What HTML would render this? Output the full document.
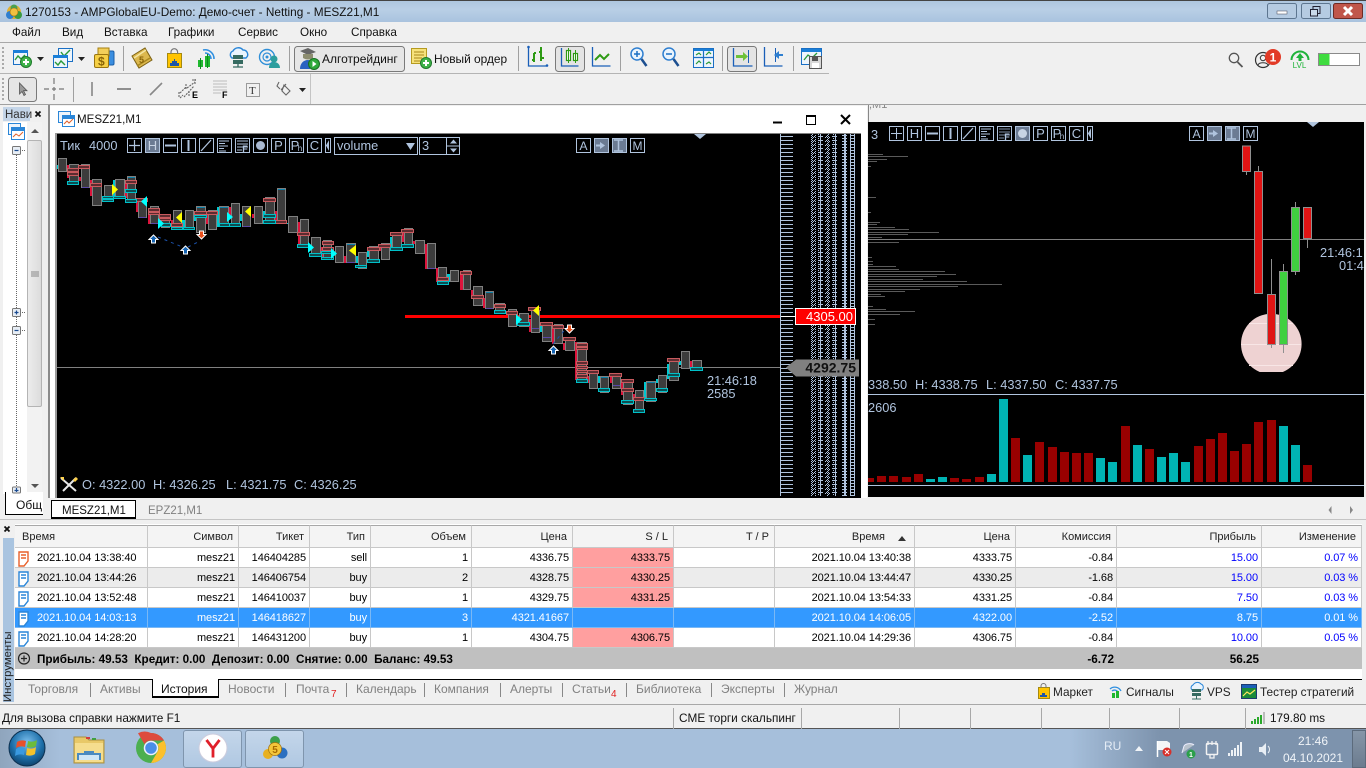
<!DOCTYPE html>
<html lang="ru"><head><meta charset="utf-8"><title>MetaTrader 5</title>
<style>
html,body{margin:0;padding:0;width:1366px;height:768px;overflow:hidden;background:#f0f0f0;font-family:"Liberation Sans","DejaVu Sans",sans-serif;font-size:11px;color:#000}
.a{position:absolute}
svg{position:absolute;left:0;top:0}
svg text{font-family:"Liberation Sans","DejaVu Sans",sans-serif}
table{position:absolute;left:15px;top:525px;width:1347px;table-layout:fixed;border-collapse:separate;border-spacing:0;font-size:11px}
td,th{box-sizing:border-box;padding:1px 3px 0 0;text-align:right;white-space:nowrap;overflow:hidden;border-right:1px solid #c8c8c8;border-bottom:1px solid #c8c8c8;height:20px;font-weight:normal;letter-spacing:-.08px}
th{height:23px;background:#f4f4f4;padding:0 5px 0 0;color:#222;border-top:1px solid #a8a8a8;letter-spacing:0}
tr.g td{background:#ececec}
tr.s td{background:#3399ff;color:#fff;border-color:#7ab8f5}
td.sl{background:#ff9f9f!important}
td.u{color:#0000ff}
tr.s td.u{color:#fff}
tr.t td{background:#c0c0c0;font-weight:bold;height:21px;border:0;font-size:11.7px;letter-spacing:0}
</style></head><body>

<div class="a" style="left:0;top:0;width:1366px;height:22px;background:linear-gradient(#aec6df,#b9cfe6 40%,#a9c3de);border-top:1px solid #444;box-sizing:border-box"></div>
<div class="a" style="left:0;top:42px;width:829px;height:1px;background:#a8a8a8"></div>
<div class="a" style="left:829px;top:42px;width:537px;height:1px;background:#a8a8a8"></div>
<div class="a" style="left:0;top:73px;width:829px;height:1px;background:#b4b4b4"></div>
<div class="a" style="left:310px;top:74px;width:1px;height:30px;background:#c4c4c4"></div>
<div class="a" style="left:0;top:104px;width:1366px;height:1px;background:#a0a0a0"></div>

<!-- navigator -->
<div class="a" style="left:3px;top:107px;width:27px;height:14px;background:#c4d5e8"></div>
<div class="a" style="left:3px;top:122px;width:24px;height:372px;background:#fff"></div>
<div class="a" style="left:27px;top:122px;width:15px;height:372px;background:#f2f2f2"></div>
<div class="a" style="left:27px;top:140px;width:15px;height:267px;background:linear-gradient(90deg,#ececec,#dcdcdc);border:1px solid #b4b4b4;box-sizing:border-box;border-radius:2px"></div>
<div class="a" style="left:48px;top:105px;width:2px;height:393px;background:#8c8c8c"></div>
<div class="a" style="left:5px;top:492px;width:38px;height:23px;background:#fff;border-left:1px solid #000;border-bottom:1px solid #000;box-sizing:border-box"></div>

<!-- main chart window -->
<div class="a" style="left:50px;top:106px;width:817px;height:392px;background:#fff"></div>
<div class="a" style="left:55px;top:133px;width:806px;height:2px;background:#808080"></div>
<div class="a" style="left:55px;top:133px;width:2px;height:365px;background:#9a9a9a"></div>
<div class="a" style="left:57px;top:134px;width:804px;height:364px;background:#000"></div>

<!-- right chart window -->
<div class="a" style="left:868px;top:105px;width:496px;height:17px;background:#f0f0f0;overflow:hidden;border-left:1px solid #888;box-sizing:border-box"><span class="a" style="left:0;top:-6px;color:#888;font-size:11px">,M1</span></div>
<div class="a" style="left:868px;top:122px;width:496px;height:375px;background:#000"></div>

<!-- chart tabs -->
<div class="a" style="left:50px;top:498px;width:1316px;height:21px;background:#f0f0f0"></div>
<div class="a" style="left:0;top:519px;width:1366px;height:1px;background:#c4c4c4"></div>
<div class="a" style="left:51px;top:500px;width:85px;height:19px;background:#fff;border:1px solid #000;border-top:1px solid #000;border-bottom:2px solid #000;box-sizing:border-box"></div>

<!-- table panel -->
<div class="a" style="left:15px;top:524px;width:1347px;height:155px;background:#fff"></div>
<div class="a" style="left:3px;top:538px;width:11px;height:164px;background:#a9c4e0"></div>
<div class="a" style="left:3px;top:632px;width:11px;height:70px;writing-mode:vertical-rl;transform:rotate(180deg);font-size:11.3px;line-height:11px;color:#222;text-align:left;white-space:nowrap">Инструменты</div>
<table>
<colgroup><col style="width:133px"><col style="width:91px"><col style="width:71px"><col style="width:61px"><col style="width:101px"><col style="width:101px"><col style="width:101px"><col style="width:101px"><col style="width:140px"><col style="width:101px"><col style="width:101px"><col style="width:145px"><col style="width:100px"></colgroup>
<tr><th style="text-align:left;padding-left:7px">Время</th><th>Символ</th><th>Тикет</th><th>Тип</th><th>Объем</th><th>Цена</th><th>S / L</th><th>T / P</th><th style="padding-right:29px">Время</th><th>Цена</th><th>Комиссия</th><th>Прибыль</th><th>Изменение</th></tr>
<tr><td style="text-align:left;padding-left:22px">2021.10.04 13:38:40</td><td>mesz21</td><td>146404285</td><td>sell</td><td>1</td><td>4336.75</td><td class="sl">4333.75</td><td></td><td>2021.10.04 13:40:38</td><td>4333.75</td><td>-0.84</td><td class="u">15.00</td><td class="u">0.07 %</td></tr>
<tr class="g"><td style="text-align:left;padding-left:22px">2021.10.04 13:44:26</td><td>mesz21</td><td>146406754</td><td>buy</td><td>2</td><td>4328.75</td><td class="sl">4330.25</td><td></td><td>2021.10.04 13:44:47</td><td>4330.25</td><td>-1.68</td><td class="u">15.00</td><td class="u">0.03 %</td></tr>
<tr><td style="text-align:left;padding-left:22px">2021.10.04 13:52:48</td><td>mesz21</td><td>146410037</td><td>buy</td><td>1</td><td>4329.75</td><td class="sl">4331.25</td><td></td><td>2021.10.04 13:54:33</td><td>4331.25</td><td>-0.84</td><td class="u">7.50</td><td class="u">0.03 %</td></tr>
<tr class="s"><td style="text-align:left;padding-left:22px">2021.10.04 14:03:13</td><td>mesz21</td><td>146418627</td><td>buy</td><td>3</td><td>4321.41667</td><td></td><td></td><td>2021.10.04 14:06:05</td><td>4322.00</td><td>-2.52</td><td class="u">8.75</td><td class="u">0.01 %</td></tr>
<tr><td style="text-align:left;padding-left:22px">2021.10.04 14:28:20</td><td>mesz21</td><td>146431200</td><td>buy</td><td>1</td><td>4304.75</td><td class="sl">4306.75</td><td></td><td>2021.10.04 14:29:36</td><td>4306.75</td><td>-0.84</td><td class="u">10.00</td><td class="u">0.05 %</td></tr>
<tr class="t"><td colspan="10" style="text-align:left;padding-left:22px">Прибыль: 49.53&nbsp; Кредит: 0.00&nbsp; Депозит: 0.00&nbsp; Снятие: 0.00&nbsp; Баланс: 49.53</td><td>-6.72</td><td>56.25</td><td></td></tr>
</table>
<div class="a" style="left:15px;top:679px;width:1347px;height:1px;background:#000"></div>
<div class="a" style="left:152px;top:679px;width:67px;height:19px;background:#fff;border:1px solid #000;border-top:0;border-bottom:2px solid #000;box-sizing:border-box"></div>
<div class="a" style="left:0;top:704px;width:1366px;height:1px;background:#a8a8a8"></div>
<div class="a" style="left:0;top:728px;width:1366px;height:1px;background:#555"></div>

<!-- taskbar -->
<div class="a" style="left:0;top:729px;width:1366px;height:39px;background:linear-gradient(90deg,#8fa5bd 0,#a6bfdb 60px,#a6bfdb 1070px,#7d93ad 1160px,#7d93ad 1366px)"></div>
<div class="a" style="left:183px;top:730px;width:59px;height:38px;border:1px solid #7f95ad;border-radius:3px;box-sizing:border-box;background:linear-gradient(#c4d6ea,#b0c8e2)"></div>
<div class="a" style="left:245px;top:730px;width:59px;height:38px;border:1px solid #7f95ad;border-radius:3px;box-sizing:border-box;background:linear-gradient(#c4d6ea,#b0c8e2)"></div>
<div class="a" style="left:1352px;top:730px;width:14px;height:38px;background:linear-gradient(#8696a8,#6c7c8f);border:1px solid #5c6b7c;box-sizing:border-box"></div>

<svg width="1366" height="768" viewBox="0 0 1366 768">
<defs>
<pattern id="tk" width="13" height="4" patternUnits="userSpaceOnUse"><rect width="13" height="1" fill="#b0c4de"/></pattern>
<pattern id="ch" width="4" height="4" patternUnits="userSpaceOnUse"><rect width="1" height="1" x="0" y="0" fill="#b0c4de"/><rect width="1" height="1" x="2" y="0" fill="#b0c4de"/><rect width="1" height="1" x="1" y="1" fill="#b0c4de"/><rect width="1" height="1" x="3" y="1" fill="#b0c4de"/><rect width="1" height="1" x="0" y="2" fill="#b0c4de"/><rect width="1" height="1" x="3" y="3" fill="#b0c4de"/></pattern>
<pattern id="dn" width="5" height="4" patternUnits="userSpaceOnUse"><rect width="5" height="1" fill="#b0c4de"/><rect width="1" height="4" fill="#b0c4de"/><rect x="3" y="2" width="1" height="1" fill="#b0c4de"/></pattern>
<pattern id="ld" width="5" height="3" patternUnits="userSpaceOnUse"><rect width="5" height="1" fill="#b0c4de"/><rect width="1" height="3" fill="#b0c4de"/><rect x="4" width="1" height="3" fill="#b0c4de"/></pattern>
<radialGradient id="orb" cx=".5" cy=".35" r=".7"><stop offset="0" stop-color="#7cc0ee"/><stop offset=".6" stop-color="#1c6ea8"/><stop offset="1" stop-color="#0c3a60"/></radialGradient>
</defs>

<!-- title bar -->
<circle cx="14" cy="12" r="7" fill="#e0b030"/><circle cx="10" cy="15" r="4" fill="#2f7fd0"/><circle cx="18" cy="15" r="4" fill="#3a9a40"/><circle cx="14" cy="8" r="3.5" fill="#4aa050"/><circle cx="14" cy="12" r="4" fill="#f0c040" stroke="#a07010" stroke-width=".6"/>
<text x="25" y="16" font-size="11.8" fill="#111">1270153 - AMPGlobalEU-Demo: Демо-счет - Netting - MESZ21,M1</text>
<rect x="1267.5" y="3.5" width="29" height="15" rx="2" fill="#b5cbe2" stroke="#5d7690"/>
<rect x="1301.5" y="3.5" width="29" height="15" rx="2" fill="#b5cbe2" stroke="#5d7690"/>
<rect x="1333.5" y="3.5" width="29" height="15" rx="2" fill="#c0564a" stroke="#6d2a24"/>
<rect x="1277" y="11" width="10" height="3" fill="#fff" stroke="#445" stroke-width=".5"/>
<rect x="1313" y="6.5" width="7" height="7" fill="none" stroke="#223" stroke-width="1"/><rect x="1310.5" y="9.5" width="7" height="6.5" fill="#c9d9ea" stroke="#223" stroke-width="1"/>
<path d="M1344 7l8 8M1352 7l-8 8" stroke="#fff" stroke-width="3"/>

<!-- menu -->
<g font-size="11.7" fill="#111">
<text x="12" y="36">Файл</text><text x="62" y="36">Вид</text><text x="104" y="36">Вставка</text><text x="168" y="36">Графики</text><text x="238" y="36">Сервис</text><text x="300" y="36">Окно</text><text x="351" y="36">Справка</text>
</g>

<!-- toolbar grips -->
<g fill="#aaa"><rect x="2" y="47" width="2" height="2"/><rect x="2" y="51" width="2" height="2"/><rect x="2" y="55" width="2" height="2"/><rect x="2" y="59" width="2" height="2"/><rect x="2" y="63" width="2" height="2"/><rect x="2" y="67" width="2" height="2"/>
<rect x="2" y="78" width="2" height="2"/><rect x="2" y="82" width="2" height="2"/><rect x="2" y="86" width="2" height="2"/><rect x="2" y="90" width="2" height="2"/><rect x="2" y="94" width="2" height="2"/><rect x="2" y="98" width="2" height="2"/></g>
<g stroke="#a0a0a0" stroke-width="1"><path d="M123.5 46v25M289.5 46v25M518.5 46v25M620.5 46v25M722.5 46v25M793.5 46v25M73.5 77v25"/></g>

<!-- icon 1 -->
<rect x="13.5" y="50.5" width="14" height="14" fill="#eef5fc" stroke="#1a6fc4"/><rect x="13" y="50" width="15" height="3" fill="#1a7fd8"/><path d="M15 60l3-4 3 3 4-4" fill="none" stroke="#2a9a3a" stroke-width="1.4"/><circle cx="26" cy="62" r="5.5" fill="#3fb34a" stroke="#1e7a2a"/><path d="M23 62h6M26 59v6" stroke="#fff" stroke-width="2"/>
<path d="M37 57h7l-3.5 4z" fill="#222"/>
<!-- icon 2 -->
<rect x="58.5" y="48.5" width="14" height="13" fill="#eef5fc" stroke="#1a6fc4"/><path d="M61 52l3 4 6-6" fill="none" stroke="#2a9a3a" stroke-width="1.4"/><rect x="53.5" y="55.5" width="14" height="12" fill="#eef5fc" stroke="#1a6fc4"/><rect x="53" y="55" width="15" height="3" fill="#1a7fd8"/><path d="M55 62l3 3 3-4 4 4" fill="none" stroke="#2a9a3a" stroke-width="1.4"/>
<path d="M78 57h7l-3.5 4z" fill="#222"/>
<!-- icon 3 -->
<rect x="100" y="51" width="14" height="14" rx="1.5" fill="#3a8ee0" stroke="#1a5fa8"/><path d="M98 48h11v8h-11z" fill="#f2cf5a" stroke="#a67f10"/><rect x="94.5" y="54.5" width="14" height="13" rx="1.5" fill="#f5cf45" stroke="#9a7510"/><text x="98" y="65.5" font-size="12" font-weight="bold" fill="#8a6508">$</text>
<!-- icon 4 -->
<path d="M132 56l13-8 7 12-13 8z" fill="#dcb84e" stroke="#7d6214"/><path d="M134 58l12-8" stroke="#f4e6a4" stroke-width="1.5"/><path d="M137 66l13-8" stroke="#a98820" stroke-width="1.5"/><text x="139" y="63" font-size="9" font-weight="bold" fill="#8a6508">5</text>
<!-- icon 5 bag -->
<rect x="167.5" y="53.5" width="14" height="14" fill="#ffc400" stroke="#a58a10"/><path d="M171 54v-2a3.3 3.3 0 0 1 6.6 0v2" fill="none" stroke="#777" stroke-width="1.2"/><path d="M170 66v-3h2v-2h2v-2h1v2h2v2h2v3z" fill="#1d56a8"/>
<!-- icon 6 signals -->
<path d="M203 50a9 9 0 0 1 11 9M205 53a6 6 0 0 1 6 6" fill="none" stroke="#2f8fe0" stroke-width="1.6"/>
<rect x="198" y="60" width="5" height="7" fill="#1fb82f"/><rect x="205" y="56" width="5" height="11" fill="#1fb82f"/><path d="M200.5 58v11M207.5 54v14" stroke="#0d8a1d"/>
<!-- icon 7 cloud -->
<path d="M232 58a4 4 0 0 1 1-7 6 6 0 0 1 10-1 4.500 4.500 0 0 1 3 8z" fill="#eaf4fd" stroke="#2a86d8" stroke-width="1.4"/><rect x="233" y="55" width="10" height="4" fill="#356a60"/><rect x="233" y="60" width="10" height="4" fill="#356a60"/><path d="M238 64v3M233 67h10" stroke="#356a60" stroke-width="1.3"/>
<!-- icon 8 -->
<circle cx="267" cy="57" r="7.500" fill="none" stroke="#2f8fd8" stroke-width="1.4"/><circle cx="267" cy="57" r="4" fill="none" stroke="#2f8fd8" stroke-width="1.2"/><circle cx="267" cy="57" r="1.500" fill="#2f8fd8"/><circle cx="274" cy="59" r="3.500" fill="#2c9e9e"/><path d="M269 68c0-4 2-6 5-6s6 2 6 6z" fill="#2c9e9e"/>
<!-- algo button -->
<rect x="294.5" y="46.5" width="110" height="25" rx="3" fill="#e6e6e6" stroke="#7a7a7a"/>
<path d="M300 51l8-3 8 4-8 3z" fill="#666"/><path d="M303 54v4c3 2 7 2 10 0v-4z" fill="#8d8d70"/><path d="M300 69c0-5 3-9 8-9 3 0 4 2 5 3l-3 6z" fill="#2a62c0"/><circle cx="314" cy="64" r="5.500" fill="#2fa83a" stroke="#176f22"/><path d="M312.500 61l4 3-4 3z" fill="#fff"/>
<text x="322" y="63" font-size="12" fill="#111">Алготрейдинг</text>
<!-- new order -->
<rect x="411.500" y="48.500" width="15" height="15" fill="#f6e27a" stroke="#b59a20"/><path d="M414 52h10M414 55h10M414 58h8M414 61h6" stroke="#a8861a"/><circle cx="426" cy="63" r="5.500" fill="#3fb34a" stroke="#1e7a2a"/><path d="M423 63h6M426 60v6" stroke="#fff" stroke-width="2"/>
<text x="434" y="63" font-size="11.9" fill="#111">Новый ордер</text>
<!-- bar chart -->
<path d="M528.500 47v19h19" fill="none" stroke="#1a5fb8" stroke-width="1.3"/><path d="M534 62v-9M532 60h2M534 53h2M541 61v-14M539 52h2M541 58h3" fill="none" stroke="#2e9a14" stroke-width="2"/><circle cx="528.500" cy="47" r="1.300" fill="#1a5fb8"/><circle cx="547" cy="65.500" r="1.300" fill="#1a5fb8"/>
<rect x="555.500" y="46.500" width="29" height="25" rx="3" fill="#e4e4e4" stroke="#7a7a7a"/>
<path d="M561.500 48v18h17" fill="none" stroke="#1a5fb8" stroke-width="1.3"/><rect x="566.500" y="50.500" width="4" height="10" fill="#fff" stroke="#2e9a14" stroke-width="1.2"/><rect x="573.500" y="53.500" width="4" height="7" fill="#fff" stroke="#2e9a14" stroke-width="1.2"/><path d="M568.500 48v15M575.500 50v13" stroke="#2e9a14"/>
<path d="M592.500 47v19h18" fill="none" stroke="#1a5fb8" stroke-width="1.3"/><path d="M595 60l5-5 4 4 5-5" fill="none" stroke="#2e9a14" stroke-width="2"/>
<!-- zoom -->
<circle cx="637" cy="54" r="6" fill="#eaf4fd" stroke="#2f7fd0" stroke-width="1.500"/><path d="M634 54h6M637 51v6" stroke="#1a6fc4" stroke-width="1.500"/><path d="M641.500 59l5 7" stroke="#1d4f90" stroke-width="2.500"/>
<circle cx="669" cy="54" r="6" fill="#eaf4fd" stroke="#2f7fd0" stroke-width="1.500"/><path d="M666 54h6" stroke="#1a6fc4" stroke-width="1.500"/><path d="M673.500 59l5 7" stroke="#1d4f90" stroke-width="2.500"/>
<!-- tile -->
<rect x="693.500" y="48.500" width="20" height="19" fill="#eef5fc" stroke="#1a6fc4"/><path d="M703.500 48v19M693 57.500h20" stroke="#1a6fc4" stroke-width="1.200"/><rect x="694" y="49" width="19" height="2" fill="#1a7fd8"/><path d="M696 55l3-2 2 2M706 55l3-3 2 2M696 64l3-3 2 2M706 64l3-2 2 2" fill="none" stroke="#2a9a3a" stroke-width="1.200"/>
<!-- autoscroll -->
<rect x="727.500" y="46.500" width="29" height="25" rx="3" fill="#e4e4e4" stroke="#7a7a7a"/>
<path d="M733.500 48v18h19" fill="none" stroke="#1a5fb8" stroke-width="1.300"/><path d="M748.500 50v13" stroke="#1a5fb8"/><path d="M736 55h7v-3l5 4.500-5 4.500v-3h-7z" fill="#6cc23a"/>
<path d="M764.500 47v19h18" fill="none" stroke="#1a5fb8" stroke-width="1.300"/><path d="M775.500 48v14" stroke="#1a5fb8"/><path d="M783 54h-4v-3l-5 4 5 4v-3h4z" fill="#2f7fd0"/>
<!-- save -->
<rect x="801.500" y="48.500" width="20" height="16" fill="#eef5fc" stroke="#1a6fc4"/><rect x="802" y="49" width="19" height="3" fill="#1a7fd8"/><path d="M804 60l4-5 4 3 5-5" fill="none" stroke="#2a9a3a" stroke-width="1.300"/><rect x="809.500" y="56.500" width="12" height="12" fill="#d8d8d8" stroke="#555"/><rect x="812" y="57" width="6" height="4" fill="#555"/><rect x="812" y="63" width="7" height="5" fill="#fff"/>
<!-- right icons -->
<circle cx="1234" cy="58" r="4.700" fill="none" stroke="#555" stroke-width="1.300"/><path d="M1237.500 62l5 5" stroke="#555" stroke-width="1.800"/>
<circle cx="1263" cy="60" r="7.500" fill="none" stroke="#333" stroke-width="1.200"/><circle cx="1263" cy="58" r="2.700" fill="none" stroke="#333"/><path d="M1258 65c1-3 9-3 10 0" fill="none" stroke="#333"/>
<circle cx="1273" cy="57" r="8" fill="#e23a26"/><text x="1273" y="61.500" font-size="12" font-weight="bold" fill="#fff" text-anchor="middle">1</text>
<path d="M1291.500 60a8.500 8.500 0 0 1 17 0" fill="none" stroke="#1fb33a" stroke-width="2"/><path d="M1300 53l4 5h-2.500v3h-3v-3h-2.500z" fill="#1fb33a"/><text x="1299.500" y="68" font-size="8" fill="#1fb33a" text-anchor="middle">LVL</text>
<rect x="1318.500" y="53.500" width="41" height="12" fill="#fff" stroke="#8a8a8a"/><rect x="1319" y="54" width="10.500" height="11" fill="#3fdc3f"/>

<!-- row 2 -->
<rect x="8.500" y="77.500" width="28" height="24" rx="3" fill="#e6e6e6" stroke="#7a7a7a"/>
<path d="M19.500 83v11l2.500-2.500 2 4 1.500-1-2-3.800h3.500z" fill="#9a9a9a" stroke="#555" stroke-width=".8"/>
<path d="M44 89h5M52 89h4M59 89h5M54 78v6M54 87v4M54 94v6" stroke="#777" stroke-width="1.200"/>
<path d="M92 82v14" stroke="#888" stroke-width="1.600"/><path d="M117 89h14" stroke="#777" stroke-width="1.600"/><path d="M150 95l12-12" stroke="#888" stroke-width="1.600"/>
<path d="M180 93l6-6M184 97l10-11M187 88l8-6M180 98l3-3M192 80l4 0M179 92v6M195 79v6M186 84v5M189 91v5" stroke="#666" fill="none" stroke-width="1.100" stroke-dasharray="2 1"/>
<text x="192" y="98" font-size="9" font-weight="bold" fill="#000">E</text>
<path d="M213.500 81h14M213.500 84h14M213.500 87h14M213.500 90h14M213.500 93h8" stroke="#888" stroke-dasharray="1 1"/>
<text x="222" y="98" font-size="9" font-weight="bold" fill="#000">F</text>
<rect x="246.500" y="83.500" width="13" height="13" fill="none" stroke="#444" stroke-dasharray="1 1"/><text x="249" y="94" font-size="11" fill="#333" style="font-family:'Liberation Serif',serif">T</text>
<path d="M279 82l-2 4 3 3M284 85l6 6-4 4-4-4zM281 90l5-6" fill="none" stroke="#666" stroke-width="1.100"/>
<path d="M299 88h7l-3.500 4z" fill="#222"/>

<!-- navigator detail -->
<text x="5" y="118" font-size="11.500" fill="#333">Нави</text>
<path d="M35.500 111.500l5 5M40.500 111.500l-5 5" stroke="#111" stroke-width="1.800"/>
<rect x="8.500" y="123.500" width="12" height="11" fill="#eef5fc" stroke="#2a86d8"/><rect x="11.500" y="127.500" width="13" height="12" fill="#fff" stroke="#2a86d8"/><rect x="12" y="128" width="12" height="3" fill="#2a86d8"/><path d="M13 137l3-3 3 2 4-4" fill="none" stroke="#e0602a"/>
<path d="M31 133l4-4 4 4z" fill="#555"/><path d="M31 484l4 4 4-4z" fill="#555"/>
<path d="M31 272h8M31 274h8M31 276h8" stroke="#888"/>
<path d="M16.500 155v335" stroke="#666" stroke-dasharray="1 1"/>
<g><rect x="12.500" y="146.500" width="8" height="8" rx="1" fill="#e8eef5" stroke="#777"/><path d="M14.500 150.500h4" stroke="#1a4a90" stroke-width="1.200"/><path d="M22 150.500h4" stroke="#666" stroke-dasharray="1 1"/>
<rect x="12.500" y="308.500" width="8" height="8" rx="1" fill="#e8eef5" stroke="#777"/><path d="M14.500 312.500h4M16.500 310.500v4" stroke="#1a4a90" stroke-width="1.200"/><path d="M22 312.500h4" stroke="#666" stroke-dasharray="1 1"/>
<rect x="12.500" y="326.500" width="8" height="8" rx="1" fill="#e8eef5" stroke="#777"/><path d="M14.500 330.500h4" stroke="#1a4a90" stroke-width="1.200"/><path d="M22 330.500h4" stroke="#666" stroke-dasharray="1 1"/>
<rect x="12.500" y="487" width="8" height="6" rx="1" fill="#e8eef5" stroke="#777"/><path d="M14.500 490.500h4M16.500 488v4" stroke="#1a4a90" stroke-width="1.200"/></g>
<text x="16" y="509" font-size="12" fill="#111">Общ</text>

<!-- main chart titlebar -->
<rect x="58.500" y="111.500" width="12" height="11" fill="#eef5fc" stroke="#2a86d8"/><rect x="62.500" y="115.500" width="12" height="11" fill="#fff" stroke="#2a86d8"/><rect x="63" y="116" width="11" height="3" fill="#2a86d8"/><path d="M64 124l3-3 2 2 4-4" fill="none" stroke="#e0602a"/>
<text x="77" y="123" font-size="11.6" fill="#111">MESZ21,M1</text>
<path d="M773 122.500h9" stroke="#000" stroke-width="2"/>
<rect x="806.500" y="115.500" width="9" height="9" fill="none" stroke="#000"/><path d="M806 116h10" stroke="#000" stroke-width="2"/>
<path d="M841 115l9 9M850 115l-9 9" stroke="#000" stroke-width="2"/>

<!-- MAIN CHART -->
<g shape-rendering="crispEdges">
<rect x="780" y="134" width="1" height="362" fill="#b0c4de"/>
<rect x="780" y="134" width="13" height="362" fill="url(#tk)"/>
<rect x="811" y="134" width="5" height="362" fill="url(#ch)"/>
<rect x="818" y="134" width="5" height="362" fill="url(#dn)"/>
<rect x="825" y="134" width="5" height="362" fill="url(#ch)"/>
<rect x="832" y="134" width="5" height="362" fill="url(#dn)"/>
<rect x="842" y="134" width="5" height="362" fill="url(#ld)"/>
<rect x="850" y="134" width="5" height="362" fill="url(#ld)"/>
<rect x="861" y="134" width="6" height="364" fill="#fff"/>
<rect x="57" y="367" width="723" height="1" fill="#808080"/>
<rect x="405" y="315" width="375" height="3" fill="#ff0000"/>
<rect x="781" y="316" width="14" height="1" fill="#fff"/>

<!-- side bars red -->
<g fill="#dc143c">
<rect x="67" y="165" width="2" height="13"/><rect x="79" y="177" width="2" height="4"/><rect x="90" y="180" width="2" height="16"/><rect x="125" y="184" width="2" height="14"/><rect x="136" y="199" width="2" height="13"/><rect x="148" y="215" width="2" height="9"/><rect x="171" y="220" width="2" height="7"/><rect x="206" y="213" width="2" height="11"/><rect x="229" y="207" width="2" height="8"/><rect x="252" y="214" width="2" height="4"/><rect x="275" y="211" width="2" height="11"/><rect x="298" y="222" width="2" height="22"/><rect x="321" y="247" width="2" height="11"/><rect x="344" y="256" width="2" height="7"/><rect x="379" y="248" width="2" height="3"/><rect x="402" y="233" width="2" height="9"/><rect x="413" y="241" width="2" height="3"/><rect x="425" y="244" width="2" height="25"/><rect x="436" y="268" width="2" height="14"/><rect x="460" y="274" width="3" height="16"/>
<rect x="471" y="290" width="2" height="8"/><rect x="483" y="298" width="2" height="10"/><rect x="529" y="319" width="2" height="13"/><rect x="552" y="325" width="2" height="19"/><rect x="563" y="343" width="2" height="7"/><rect x="575" y="342" width="2" height="38"/><rect x="587" y="376" width="2" height="7"/><rect x="610" y="377" width="2" height="6"/><rect x="621" y="383" width="2" height="12"/><rect x="633" y="394" width="2" height="7"/><rect x="690" y="361" width="2" height="6"/>
</g>
<!-- side bars cyan -->
<g fill="#00c8d0">
<rect x="57" y="165" width="1" height="4"/><rect x="113" y="180" width="2" height="18"/><rect x="182" y="220" width="3" height="10"/><rect x="194" y="214" width="2" height="7"/><rect x="217" y="207" width="2" height="20"/><rect x="240" y="214" width="2" height="7"/><rect x="263" y="211" width="2" height="7"/><rect x="286" y="223" width="2" height="1"/><rect x="356" y="256" width="2" height="7"/><rect x="367" y="250" width="2" height="7"/><rect x="390" y="237" width="2" height="13"/><rect x="447" y="274" width="3" height="8"/>
<rect x="540" y="326" width="2" height="6"/><rect x="598" y="376" width="2" height="7"/><rect x="644" y="382" width="2" height="18"/><rect x="656" y="379" width="2" height="4"/><rect x="667" y="364" width="2" height="15"/><rect x="679" y="361" width="2" height="4"/>
</g>
<!-- bodies -->
<g fill="#3c3c3c" stroke="#808080">
<rect x="58.500" y="158.500" width="8" height="13"/><rect x="69.500" y="164.500" width="9" height="19"/><rect x="81.500" y="164.500" width="8" height="23"/><rect x="92.500" y="179.500" width="9" height="26"/><rect x="104.500" y="185.500" width="8" height="16"/><rect x="115.500" y="179.500" width="9" height="19"/><rect x="127.500" y="176.500" width="8" height="25"/><rect x="138.500" y="198.500" width="8" height="19"/><rect x="150.500" y="206.500" width="8" height="17"/><rect x="161.500" y="214.500" width="8" height="13"/><rect x="173.500" y="210.500" width="8" height="19"/><rect x="185.500" y="210.500" width="8" height="19"/><rect x="196.500" y="206.500" width="9" height="26"/><rect x="208.500" y="210.500" width="8" height="19"/><rect x="219.500" y="206.500" width="9" height="20"/><rect x="231.500" y="203.500" width="8" height="23"/><rect x="242.500" y="206.500" width="8" height="20"/><rect x="254.500" y="206.500" width="8" height="17"/><rect x="265.500" y="197.500" width="9" height="26"/><rect x="277.500" y="188.500" width="8" height="35"/><rect x="288.500" y="216.500" width="9" height="16"/><rect x="300.500" y="219.500" width="8" height="28"/><rect x="311.500" y="237.500" width="9" height="19"/><rect x="323.500" y="240.500" width="8" height="19"/><rect x="335.500" y="246.500" width="8" height="16"/><rect x="346.500" y="243.500" width="9" height="19"/><rect x="358.500" y="252.500" width="8" height="16"/><rect x="369.500" y="246.500" width="9" height="16"/><rect x="381.500" y="243.500" width="8" height="16"/><rect x="392.500" y="232.500" width="9" height="18"/><rect x="404.500" y="228.500" width="8" height="19"/><rect x="415.500" y="240.500" width="9" height="13"/><rect x="427.500" y="243.500" width="8" height="25"/><rect x="438.500" y="267.500" width="8" height="16"/><rect x="450.500" y="270.500" width="8" height="11"/><rect x="463.500" y="270.500" width="7" height="19"/><rect x="473.500" y="286.500" width="9" height="19"/><rect x="485.500" y="291.500" width="8" height="17"/><rect x="495.500" y="303.500" width="9" height="10"/><rect x="508.500" y="309.500" width="8" height="17"/><rect x="519.500" y="313.500" width="9" height="13"/><rect x="531.500" y="307.500" width="8" height="25"/><rect x="542.500" y="322.500" width="9" height="19"/><rect x="554.500" y="324.500" width="8" height="19"/><rect x="565.500" y="337.500" width="9" height="13"/><rect x="577.500" y="342.500" width="9" height="40"/><rect x="589.500" y="370.500" width="8" height="18"/><rect x="600.500" y="376.500" width="8" height="16"/><rect x="612.500" y="373.500" width="8" height="15"/><rect x="623.500" y="379.500" width="9" height="25"/><rect x="635.500" y="390.500" width="8" height="22"/><rect x="646.500" y="381.500" width="9" height="20"/><rect x="658.500" y="375.500" width="8" height="17"/><rect x="669.500" y="358.500" width="9" height="22"/><rect x="681.500" y="351.500" width="8" height="17"/><rect x="692.500" y="360.500" width="9" height="10"/>
</g>
<!-- candle end caps -->
<g fill="#0a7fa8"><rect x="128" y="177" width="7" height="1"/><rect x="197" y="207" width="8" height="1"/><rect x="220" y="207" width="8" height="1"/><rect x="278" y="189" width="7" height="1"/><rect x="347" y="244" width="8" height="1"/><rect x="601" y="377" width="7" height="1"/><rect x="647" y="382" width="8" height="1"/><rect x="486" y="292" width="7" height="1"/></g>
<g fill="#5a48a8"><rect x="82" y="187" width="7" height="1"/><rect x="139" y="217" width="7" height="1"/><rect x="151" y="223" width="7" height="1"/><rect x="243" y="226" width="7" height="1"/><rect x="347" y="262" width="8" height="1"/><rect x="428" y="268" width="7" height="1"/><rect x="486" y="308" width="7" height="1"/><rect x="532" y="328" width="7" height="1"/><rect x="543" y="337" width="8" height="1"/><rect x="613" y="385" width="7" height="1"/></g>
<!-- pink boxes -->
<g fill="#5c2c30" stroke="#c85a5e">
<rect x="67.500" y="168.500" width="11" height="3"/><rect x="67.500" y="172.500" width="11" height="3"/><rect x="78.500" y="165.500" width="11" height="3"/><rect x="90.500" y="183.500" width="11" height="3"/><rect x="125.500" y="180.500" width="11" height="3"/><rect x="136.500" y="198.500" width="11" height="3"/><rect x="148.500" y="208.500" width="11" height="3"/><rect x="148.500" y="212.500" width="11" height="2"/><rect x="159.500" y="214.500" width="11" height="3"/><rect x="159.500" y="218.500" width="11" height="2"/><rect x="171.500" y="223.500" width="11" height="3"/><rect x="194.500" y="211.500" width="12" height="3"/><rect x="206.500" y="211.500" width="11" height="3"/><rect x="263.500" y="198.500" width="12" height="3"/><rect x="275.500" y="220.500" width="11" height="3"/><rect x="297.500" y="232.500" width="12" height="3"/><rect x="322.500" y="241.500" width="11" height="3"/><rect x="322.500" y="247.500" width="11" height="3"/><rect x="367.500" y="247.500" width="12" height="3"/><rect x="378.500" y="244.500" width="12" height="3"/><rect x="390.500" y="232.500" width="12" height="3"/><rect x="401.500" y="229.500" width="12" height="3"/><rect x="437.500" y="277.500" width="11" height="3"/><rect x="460.500" y="271.500" width="11" height="3"/>
<rect x="471.500" y="295.500" width="12" height="3"/><rect x="494.500" y="304.500" width="11" height="3"/><rect x="506.500" y="311.500" width="11" height="3"/><rect x="528.500" y="307.500" width="12" height="3"/><rect x="540.500" y="322.500" width="12" height="3"/><rect x="552.500" y="325.500" width="11" height="3"/><rect x="563.500" y="337.500" width="12" height="3"/><rect x="576.500" y="343.500" width="11" height="3"/><rect x="576.500" y="347.500" width="11" height="2"/><rect x="576.500" y="361.500" width="11" height="3"/><rect x="576.500" y="366.500" width="11" height="2"/><rect x="576.500" y="370.500" width="11" height="2"/><rect x="576.500" y="374.500" width="11" height="3"/><rect x="587.500" y="370.500" width="11" height="3"/><rect x="609.500" y="373.500" width="12" height="3"/><rect x="621.500" y="379.500" width="12" height="3"/><rect x="621.500" y="388.500" width="12" height="3"/><rect x="633.500" y="397.500" width="11" height="3"/><rect x="667.500" y="358.500" width="12" height="3"/>
</g>
<!-- cyan boxes -->
<g fill="#0d4c50" stroke="#00c0c8">
<rect x="67.500" y="181.500" width="11" height="3"/><rect x="102.500" y="196.500" width="11" height="2"/><rect x="102.500" y="199.500" width="11" height="2"/><rect x="113.500" y="196.500" width="12" height="2"/><rect x="125.500" y="189.500" width="11" height="3"/><rect x="125.500" y="199.500" width="11" height="3"/><rect x="161.500" y="223.500" width="9" height="3"/><rect x="171.500" y="227.500" width="11" height="2"/><rect x="183.500" y="227.500" width="11" height="2"/><rect x="194.500" y="215.500" width="12" height="2"/><rect x="219.500" y="223.500" width="10" height="3"/><rect x="229.500" y="223.500" width="11" height="3"/><rect x="263.500" y="214.500" width="12" height="3"/><rect x="263.500" y="220.500" width="12" height="3"/><rect x="297.500" y="244.500" width="12" height="3"/><rect x="309.500" y="253.500" width="12" height="3"/><rect x="321.500" y="251.500" width="12" height="2"/><rect x="321.500" y="257.500" width="12" height="2"/><rect x="355.500" y="265.500" width="11" height="2"/><rect x="367.500" y="259.500" width="12" height="3"/><rect x="390.500" y="247.500" width="12" height="3"/><rect x="401.500" y="244.500" width="12" height="3"/><rect x="437.500" y="281.500" width="11" height="3"/>
<rect x="494.500" y="310.500" width="11" height="3"/><rect x="517.500" y="322.500" width="12" height="3"/><rect x="576.500" y="379.500" width="11" height="3"/><rect x="598.500" y="388.500" width="11" height="3"/><rect x="621.500" y="400.500" width="12" height="3"/><rect x="633.500" y="409.500" width="11" height="3"/><rect x="644.500" y="398.500" width="12" height="2"/><rect x="656.500" y="388.500" width="11" height="3"/><rect x="667.500" y="373.500" width="12" height="3"/><rect x="690.500" y="367.500" width="12" height="3"/>
</g>
</g>
<!-- triangles -->
<g fill="#ffff00"><path d="M112 184l6 5.500-6 5.500z"/><path d="M182 212l-6 5.500 6 5.500z"/><path d="M251 206l-6 5.500 6 5.500z"/><path d="M356 245l-7 5.500 7 5.500z"/><path d="M539 305l-6 5.500 6 5.500z"/></g>
<g fill="#00ffff"><path d="M147 196l-6 5.500 6 5.500z"/><path d="M158 218l6 5.500-6 5.500z"/><path d="M227 212l6 5-6 5z"/><path d="M308 242l6 5.500-6 5.500z"/><path d="M331 248l6 5.500-6 5.500z"/><path d="M516 314l6 5.500-6 5.500z"/></g>
<!-- dashed trade lines -->
<g stroke="#1a50a8" fill="none" stroke-dasharray="3 4"><path d="M158 237l27 11M188 247l12-6"/><path d="M553 344l15-18"/></g>
<!-- arrows -->
<g stroke="#fff" stroke-width="1" fill="#1464b4"><path d="M153.500 235l4.500 4.500h-2.500v3.500h-4v-3.500h-2.500z"/><path d="M185.500 246l4.500 4.500h-2.500v3.500h-4v-3.500h-2.500z"/><path d="M553.500 346l4.500 4.500h-2.500v3.500h-4v-3.500h-2.500z"/></g>
<g stroke="#fff" stroke-width="1" fill="#e8501e"><path d="M201.500 239l-4.500-4.500h2.500v-3.500h4v3.500h2.500z"/><path d="M569.500 333l-4.500-4.500h2.500v-3.500h4v3.500h2.500z"/></g>
<!-- toolbar in main chart -->
<g fill="none" stroke="#b0c4de" shape-rendering="crispEdges">
<rect x="127.500" y="138.500" width="14" height="14"/><rect x="145.500" y="138.500" width="14" height="14" fill="#6b7b93"/><rect x="163.500" y="138.500" width="14" height="14"/><rect x="181.500" y="138.500" width="14" height="14"/><rect x="199.500" y="138.500" width="14" height="14"/><rect x="217.500" y="138.500" width="14" height="14"/><rect x="235.500" y="138.500" width="14" height="14"/><rect x="253.500" y="138.500" width="14" height="14"/><rect x="271.500" y="138.500" width="14" height="14"/><rect x="289.500" y="138.500" width="14" height="14"/><rect x="307.500" y="138.500" width="14" height="14"/>
<rect x="325.500" y="138.500" width="5" height="14"/>
<rect x="334.500" y="137.500" width="83" height="17"/><rect x="419.500" y="137.500" width="27" height="17"/><rect x="446.500" y="137.500" width="13" height="17"/><path d="M446.500 146h13"/>
<rect x="576.500" y="138.500" width="14" height="14"/><rect x="594.500" y="138.500" width="14" height="14" fill="#6b7b93"/><rect x="612.500" y="138.500" width="14" height="14" fill="#6b7b93"/><rect x="630.500" y="138.500" width="14" height="14"/>
</g>
<g stroke="#b0c4de" fill="none">
<path d="M129 145.500h11M134.500 140v11" stroke-width="1.200"/><path d="M165 145.500h11" stroke-width="2"/><path d="M188.500 140v11" stroke-width="2"/><path d="M201 151l10-11" stroke-width="1.300"/><path d="M219 141h10M219 143.500h6M219 146h9M219 148.500h5M219 151h7"/><path d="M237 141h11M237 144h11M237 147h11M237 150h5"/><path d="M328.500 142v7l-2-3.500z" fill="#b0c4de"/>
<path d="M596 145.500h7" stroke-width="2"/><path d="M614 140h9M614 151h9M618.500 140v11" stroke-width="1.500"/>
</g>
<path d="M600 142l5 3.500-5 3.500z" fill="#b0c4de"/>
<circle cx="260.500" cy="145.500" r="4.500" fill="#a8b8d0"/>
<g font-size="13" fill="#b0c4de" text-anchor="middle"><text x="152.500" y="150" fill="#c8d4e4">H</text><text x="245" y="152" font-size="9" font-weight="bold">F</text><text x="278.500" y="150">P</text><text x="295" y="150">P</text><text x="300" y="151" font-size="8">h</text><text x="314.500" y="150">C</text><text x="583.500" y="150" font-size="12">A</text><text x="637.500" y="150" font-size="12">M</text></g>
<g font-size="12.800" fill="#b0c4de"><text x="60" y="150">Тик</text><text x="89" y="150">4000</text><text x="337" y="150">volume</text><text x="422" y="150">3</text><text x="707" y="385">21:46:18</text><text x="707" y="398">2585</text><text x="82" y="489">O: 4322.00</text><text x="153" y="489">H: 4326.25</text><text x="226" y="489">L: 4321.75</text><text x="294" y="489">C: 4326.25</text></g>
<path d="M406 143h9l-4.500 7z" fill="#b0c4de"/><path d="M450 143.500h7l-3.500-4zM450 148.500h7l-3.500 4z" fill="#b0c4de"/>
<path d="M694 134h12l-6 5z" fill="#b0c4de"/>
<path d="M61 478l15 13M63 491l13-13" stroke="#e8e8e8" stroke-width="2"/><path d="M60 477l4 0 0 4z" fill="#ffd24a"/><path d="M76 477l2 2-3 3-2-2z" fill="#ffd24a"/>
<rect x="795.500" y="308.500" width="60" height="16" fill="#ff0000" stroke="#fff"/><text x="853" y="321" font-size="13" fill="#fff" text-anchor="end">4305.00</text>
<path d="M786 367.500l10-8h63v17h-63z" fill="#808080"/><text x="856" y="372.500" font-size="14" font-weight="bold" fill="#111" text-anchor="end">4292.75</text>

<!-- RIGHT CHART -->
<g shape-rendering="crispEdges">
<rect x="868" y="239" width="496" height="1" fill="#808080"/>
<rect x="868" y="394" width="496" height="1" fill="#b0c4de"/>
<rect x="868" y="485" width="496" height="1" fill="#b0c4de"/>
<g fill="#5a5a5a">
<rect x="868" y="154" width="15" height="1"/><rect x="868" y="156" width="40" height="1"/><rect x="868" y="159" width="19" height="1"/><rect x="868" y="161" width="9" height="1"/><rect x="868" y="166" width="3" height="1"/><rect x="868" y="197" width="8" height="1"/><rect x="868" y="212" width="3" height="1"/><rect x="868" y="222" width="12" height="1"/><rect x="868" y="224" width="9" height="1"/><rect x="868" y="227" width="27" height="1"/><rect x="868" y="229" width="41" height="1"/><rect x="868" y="232" width="71" height="1"/><rect x="868" y="234" width="40" height="1"/><rect x="868" y="237" width="14" height="1"/><rect x="868" y="242" width="31" height="1"/><rect x="868" y="257" width="4" height="1"/><rect x="868" y="261" width="5" height="1"/><rect x="868" y="264" width="5" height="1"/><rect x="868" y="266" width="28" height="1"/><rect x="868" y="269" width="31" height="1"/><rect x="868" y="271" width="77" height="1"/><rect x="868" y="274" width="88" height="1"/><rect x="868" y="276" width="69" height="1"/><rect x="868" y="279" width="55" height="1"/><rect x="868" y="281" width="99" height="1"/><rect x="868" y="284" width="134" height="1"/><rect x="868" y="286" width="90" height="1"/><rect x="868" y="289" width="52" height="1"/><rect x="868" y="291" width="37" height="1"/><rect x="868" y="294" width="13" height="1"/><rect x="868" y="296" width="17" height="1"/><rect x="868" y="306" width="5" height="1"/><rect x="868" y="309" width="18" height="1"/><rect x="868" y="311" width="47" height="1"/><rect x="868" y="314" width="32" height="1"/><rect x="868" y="319" width="7" height="1"/><rect x="868" y="324" width="7" height="1"/>
</g>
</g>
<circle cx="1271.300" cy="344" r="30.300" fill="#eed2d2"/>
<rect x="1240" y="372" width="63" height="6" fill="#000"/>
<g shape-rendering="crispEdges">
<path d="M1249 323.500h44M1241 344.500h60M1249 365.500h44" stroke="#f8e6e6"/>
<g stroke="#909090"><path d="M1246.500 172v3M1258.500 166v6M1271.500 259v36M1271.500 345v3M1283.500 264v8M1283.500 345v8M1295.500 202v6M1295.500 272v3M1307.500 239v9"/></g>
<g fill="#e01414" stroke="#909090"><rect x="1242.500" y="146" width="8" height="25.500"/><rect x="1254.500" y="171.500" width="8" height="122"/><rect x="1267.500" y="294.500" width="8" height="50"/><rect x="1303.500" y="207.500" width="8" height="31"/></g>
<g fill="#40d040" stroke="#909090"><rect x="1279.500" y="271.500" width="8" height="73"/><rect x="1291.500" y="207.500" width="8" height="64"/></g>
<g fill="#990000"><rect x="868" y="478" width="6" height="4"/><rect x="877" y="476" width="9" height="6"/><rect x="889" y="476" width="9" height="6"/><rect x="902" y="477" width="9" height="5"/><rect x="914" y="474" width="9" height="8"/><rect x="950" y="478" width="9" height="4"/><rect x="962" y="479" width="9" height="3"/><rect x="975" y="477" width="9" height="5"/><rect x="1011" y="438" width="9" height="44"/><rect x="1035" y="442" width="9" height="40"/><rect x="1048" y="447" width="9" height="35"/><rect x="1060" y="452" width="9" height="30"/><rect x="1072" y="453" width="9" height="29"/><rect x="1084" y="453" width="9" height="29"/><rect x="1121" y="426" width="9" height="56"/><rect x="1145" y="449" width="9" height="33"/><rect x="1194" y="446" width="9" height="36"/><rect x="1206" y="439" width="9" height="43"/><rect x="1218" y="433" width="9" height="49"/><rect x="1230" y="451" width="9" height="31"/><rect x="1242" y="444" width="9" height="38"/><rect x="1254" y="422" width="9" height="60"/><rect x="1267" y="420" width="9" height="62"/><rect x="1303" y="465" width="9" height="17"/></g>
<g fill="#00b4b4"><rect x="926" y="479" width="9" height="3"/><rect x="938" y="477" width="9" height="5"/><rect x="987" y="474" width="9" height="8"/><rect x="999" y="399" width="9" height="83"/><rect x="1023" y="455" width="9" height="27"/><rect x="1096" y="458" width="9" height="24"/><rect x="1108" y="462" width="9" height="20"/><rect x="1133" y="445" width="9" height="37"/><rect x="1157" y="457" width="9" height="25"/><rect x="1169" y="453" width="9" height="29"/><rect x="1181" y="462" width="9" height="20"/><rect x="1279" y="426" width="9" height="56"/><rect x="1291" y="445" width="9" height="37"/></g>
<g fill="none" stroke="#b0c4de">
<rect x="889.500" y="126.500" width="14" height="14"/><rect x="907.500" y="126.500" width="14" height="14"/><rect x="925.500" y="126.500" width="14" height="14"/><rect x="943.500" y="126.500" width="14" height="14"/><rect x="961.500" y="126.500" width="14" height="14"/><rect x="979.500" y="126.500" width="14" height="14"/><rect x="997.500" y="126.500" width="14" height="14"/><rect x="1015.500" y="126.500" width="14" height="14" fill="#6b7b93"/><rect x="1033.500" y="126.500" width="14" height="14"/><rect x="1051.500" y="126.500" width="14" height="14"/><rect x="1069.500" y="126.500" width="14" height="14"/><rect x="1087.500" y="126.500" width="5" height="14"/>
<rect x="1189.500" y="126.500" width="14" height="14"/><rect x="1207.500" y="126.500" width="14" height="14" fill="#6b7b93"/><rect x="1225.500" y="126.500" width="14" height="14" fill="#6b7b93"/><rect x="1243.500" y="126.500" width="14" height="14"/>
</g>
</g>
<g stroke="#b0c4de" fill="none">
<path d="M891 133.500h11M896.500 128v11"/><path d="M927 133.500h11" stroke-width="2"/><path d="M950.500 128v11" stroke-width="2"/><path d="M963 139l10-11" stroke-width="1.300"/><path d="M981 129h10M981 131.500h6M981 134h9M981 136.500h5M981 139h7"/><path d="M999 129h11M999 132h11M999 135h11M999 138h5" stroke="#8090a8"/><path d="M1090.500 130v7l-2-3.500z" fill="#b0c4de"/>
<path d="M1209 133.500h7" stroke-width="2"/><path d="M1227 128h9M1227 139h9M1231.500 128v11" stroke-width="1.500"/>
</g>
<path d="M1213 130l5 3.500-5 3.500z" fill="#b0c4de"/>
<circle cx="1022.500" cy="133.500" r="4.500" fill="#c8d4e4"/>
<g font-size="13" fill="#b0c4de" text-anchor="middle"><text x="914.500" y="138">H</text><text x="1007" y="140" font-size="9" font-weight="bold">F</text><text x="1040.500" y="138">P</text><text x="1057" y="138">P</text><text x="1062" y="139" font-size="8">h</text><text x="1076.500" y="138">C</text><text x="1196.500" y="138" font-size="12">A</text><text x="1250.500" y="138" font-size="12">M</text></g>
<path d="M1307 122h12l-6 5z" fill="#b0c4de"/>
<g font-size="12.800" fill="#b0c4de"><text x="871" y="139">3</text><text x="868" y="389">338.50</text><text x="915" y="389">H: 4338.75</text><text x="986" y="389">L: 4337.50</text><text x="1055" y="389">C: 4337.75</text><text x="868" y="412">2606</text><text x="1320" y="257">21:46:1</text><text x="1339" y="270">01:4</text></g>

<!-- chart tabs -->
<text x="62" y="514" font-size="11.500" fill="#111">MESZ21,M1</text>
<text x="148" y="514" font-size="11.500" fill="#808080">EPZ21,M1</text>
<path d="M1331.500 506v8l-3-4z" fill="#888"/><path d="M1350 506v8l3-4z" fill="#888"/>

<!-- panel close -->
<path d="M4.500 526.500l5 5M9.500 526.500l-5 5" stroke="#111" stroke-width="1.800"/>
<path d="M898 541h8l-4-5z" fill="#333"/>
<!-- row icons -->
<g fill="#fff" stroke-width="1.400">
<path d="M19 552h9v9l-4 5h-5z" stroke="#e8602a"/><path d="M21 555h5M21 558h5" stroke="#e8602a" fill="none"/>
<path d="M19 572h9v9l-4 5h-5z" stroke="#2a86d8"/><path d="M21 575h5M21 578h5" stroke="#2a86d8" fill="none"/>
<path d="M19 592h9v9l-4 5h-5z" stroke="#2a86d8"/><path d="M21 595h5M21 598h5" stroke="#2a86d8" fill="none"/>
<path d="M19 612h9v9l-4 5h-5z" stroke="#2a86d8"/><path d="M21 615h5M21 618h5" stroke="#2a86d8" fill="none"/>
<path d="M19 632h9v9l-4 5h-5z" stroke="#2a86d8"/><path d="M21 635h5M21 638h5" stroke="#2a86d8" fill="none"/>
</g>
<circle cx="24" cy="658.500" r="5.500" fill="none" stroke="#222" stroke-width="1.200"/><path d="M21 658.500h6M24 655.500v6" stroke="#222" stroke-width="1.200"/>

<!-- bottom tabs -->
<g font-size="12" fill="#808080">
<text x="28" y="693">Торговля</text><text x="100" y="693">Активы</text><text x="161" y="693" fill="#111">История</text><text x="228" y="693">Новости</text><text x="296" y="693">Почта</text><text x="356" y="693">Календарь</text><text x="434" y="693">Компания</text><text x="510" y="693">Алерты</text><text x="572" y="693">Статьи</text><text x="636" y="693">Библиотека</text><text x="721" y="693">Эксперты</text><text x="794" y="693">Журнал</text>
</g>
<text x="331" y="697" font-size="10" fill="#e02020">7</text><text x="611" y="697" font-size="10" fill="#e02020">4</text>
<path d="M90.500 683v14M285.500 683v14M346.500 683v14M424.500 683v14M500.500 683v14M562.500 683v14M626.500 683v14M711.500 683v14M784.500 683v14" stroke="#888"/>
<rect x="1038.500" y="687.500" width="11" height="11" fill="#ffc400" stroke="#a58a10"/><path d="M1041 688v-2a2.500 2.500 0 0 1 5 0v2" fill="none" stroke="#777"/><path d="M1040 697v-2h2v-2h3v2h2v2z" fill="#1d56a8"/>
<path d="M1110 689a7 7 0 0 1 11 2M1112 691a4 4 0 0 1 6 1" fill="none" stroke="#2f8fe0" stroke-width="1.300"/><rect x="1112" y="693" width="3" height="5" fill="#1fb82f"/><rect x="1116" y="691" width="3" height="7" fill="#1fb82f"/>
<path d="M1192 690a3 3 0 0 1 1-5 5 5 0 0 1 8-1 3.500 3.500 0 0 1 1 6z" fill="#eaf4fd" stroke="#2a86d8"/><rect x="1192" y="689" width="9" height="3" fill="#356a60"/><rect x="1192" y="693" width="9" height="3" fill="#356a60"/><path d="M1196.500 696v3M1192 699h9" stroke="#356a60"/>
<rect x="1241.500" y="684.500" width="15" height="14" fill="#1a8a3a" stroke="#1a3a70"/><rect x="1242" y="685" width="14" height="3" fill="#1a5fb8"/><path d="M1243 696l4-4 3 2 5-4" fill="none" stroke="#ffe860" stroke-width="1.200"/>
<g font-size="11.800" fill="#222"><text x="1053" y="696">Маркет</text><text x="1126" y="696">Сигналы</text><text x="1207" y="696">VPS</text><text x="1260" y="696">Тестер стратегий</text></g>

<!-- status bar -->
<g stroke="#a8a8a8"><path d="M673.500 708v21M801.500 708v21M899.500 708v21M970.500 708v21M1041.500 708v21M1109.500 708v21M1179.500 708v21M1245.500 708v21"/></g>
<g font-size="11.800" fill="#111"><text x="2" y="722">Для вызова справки нажмите F1</text><text x="679" y="722">CME торги скальпинг</text><text x="1270" y="722">179.80 ms</text></g>
<g fill="#2aa82a"><rect x="1251" y="721" width="2" height="3"/><rect x="1254" y="719" width="2" height="5"/><rect x="1257" y="717" width="2" height="7"/><rect x="1260" y="715" width="2" height="9"/></g><rect x="1263" y="712" width="2" height="12" fill="#bbb"/>

<!-- taskbar icons -->
<circle cx="27" cy="748" r="18" fill="url(#orb)" stroke="#0c3050"/>
<path d="M17 742c3-2 6-2 9-1l-1 6c-3-1-6-1-9 1z" fill="#e8502a"/><path d="M28 741c3 1 6 1 9-1l-1 6c-3 2-6 2-9 1z" fill="#6cbc3a"/><path d="M16 749c3-2 6-2 9-1l-1 7c-3-1-6-1-9 1z" fill="#3a9ae0"/><path d="M27 748c3 1 6 1 9-1l-1 7c-3 2-6 2-9 1z" fill="#f4c22a"/>
<path d="M74 737h12l3 3h15v23H74z" fill="#e8c868" stroke="#a98f40"/><rect x="75" y="743" width="28" height="19" fill="#f5dd8e"/><path d="M78 760v-6h22v6" fill="#cfe6f6" stroke="#4a8ac0" stroke-width="2"/><rect x="84" y="751" width="10" height="3" fill="#4a8ac0"/><rect x="86" y="737" width="4" height="2" fill="#d04040"/><rect x="92" y="738" width="4" height="2" fill="#40a040"/>
<circle cx="151" cy="748" r="15" fill="#4caf50"/><path d="M151 733a15 15 0 0 1 13 7.500h-13a7.500 7.500 0 0 0-6.500 3.700l-6.500-11a15 15 0 0 1 13-.2z" fill="#dd4b3e"/><path d="M164 740.500a15 15 0 0 1-13 22.500l6.500-11.300a7.500 7.500 0 0 0 0-7.500z" fill="#fbc02d"/><circle cx="151" cy="748" r="6.500" fill="#4a8ee8" stroke="#eef" stroke-width="1.500"/>
<circle cx="213" cy="748" r="14" fill="#fff" stroke="#ccd"/><path d="M206.500 740l6.500 8.500 6.500-8.500M213 748v9.500" fill="none" stroke="#e0202a" stroke-width="2.800"/>
<circle cx="275" cy="741" r="5" fill="#3da04a"/><circle cx="268" cy="754" r="5" fill="#e8b020"/><circle cx="282" cy="753" r="5.500" fill="#2a6fc0"/><circle cx="275" cy="749" r="6.500" fill="#f4c63a" stroke="#a07010" stroke-width=".7"/><text x="275" y="753" font-size="10" font-weight="bold" text-anchor="middle" fill="#a86a00">5</text>
<text x="1104" y="750" font-size="12" fill="#e4ecf5">RU</text>
<path d="M1135 751h8l-4-5z" fill="#f0f4f8"/>
<path d="M1157.500 741v16" stroke="#fff" stroke-width="1.500"/><path d="M1158 741h9l3 2v7h-12z" fill="#f4f6f8"/><circle cx="1167" cy="752" r="4.500" fill="#d8302a"/><path d="M1165 750l4 4M1169 750l-4 4" stroke="#fff"/>
<path d="M1182 753l2-7c2-3 8-3 10-1" fill="#b8c2cc" stroke="#eef"/><circle cx="1191" cy="754" r="4.500" fill="#2aa04a"/><text x="1191" y="757" font-size="7" font-weight="bold" fill="#fff" text-anchor="middle">1</text>
<rect x="1206.500" y="743.500" width="11" height="11" rx="1" fill="none" stroke="#f2f2f2" stroke-width="1.500"/><path d="M1208 741v4M1212 741v4M1216 741v4M1210 755v3h4v-3" stroke="#f2f2f2" stroke-width="1.300" fill="none"/>
<g fill="#eef2f6"><rect x="1228" y="753" width="2" height="3"/><rect x="1231" y="750" width="2" height="6"/><rect x="1234" y="748" width="2" height="8"/><rect x="1237" y="745" width="2" height="11"/><rect x="1240" y="742" width="2" height="14"/></g>
<path d="M1259 747h3l4-4v13l-4-4h-3z" fill="#e8eef4"/><path d="M1268 746c2 2 2 5 0 7" fill="none" stroke="#e8eef4"/>
<text x="1313" y="745" font-size="12" fill="#f0f4f8" text-anchor="middle">21:46</text>
<text x="1313" y="762" font-size="12" fill="#f0f4f8" text-anchor="middle">04.10.2021</text>
</svg>
</body></html>
